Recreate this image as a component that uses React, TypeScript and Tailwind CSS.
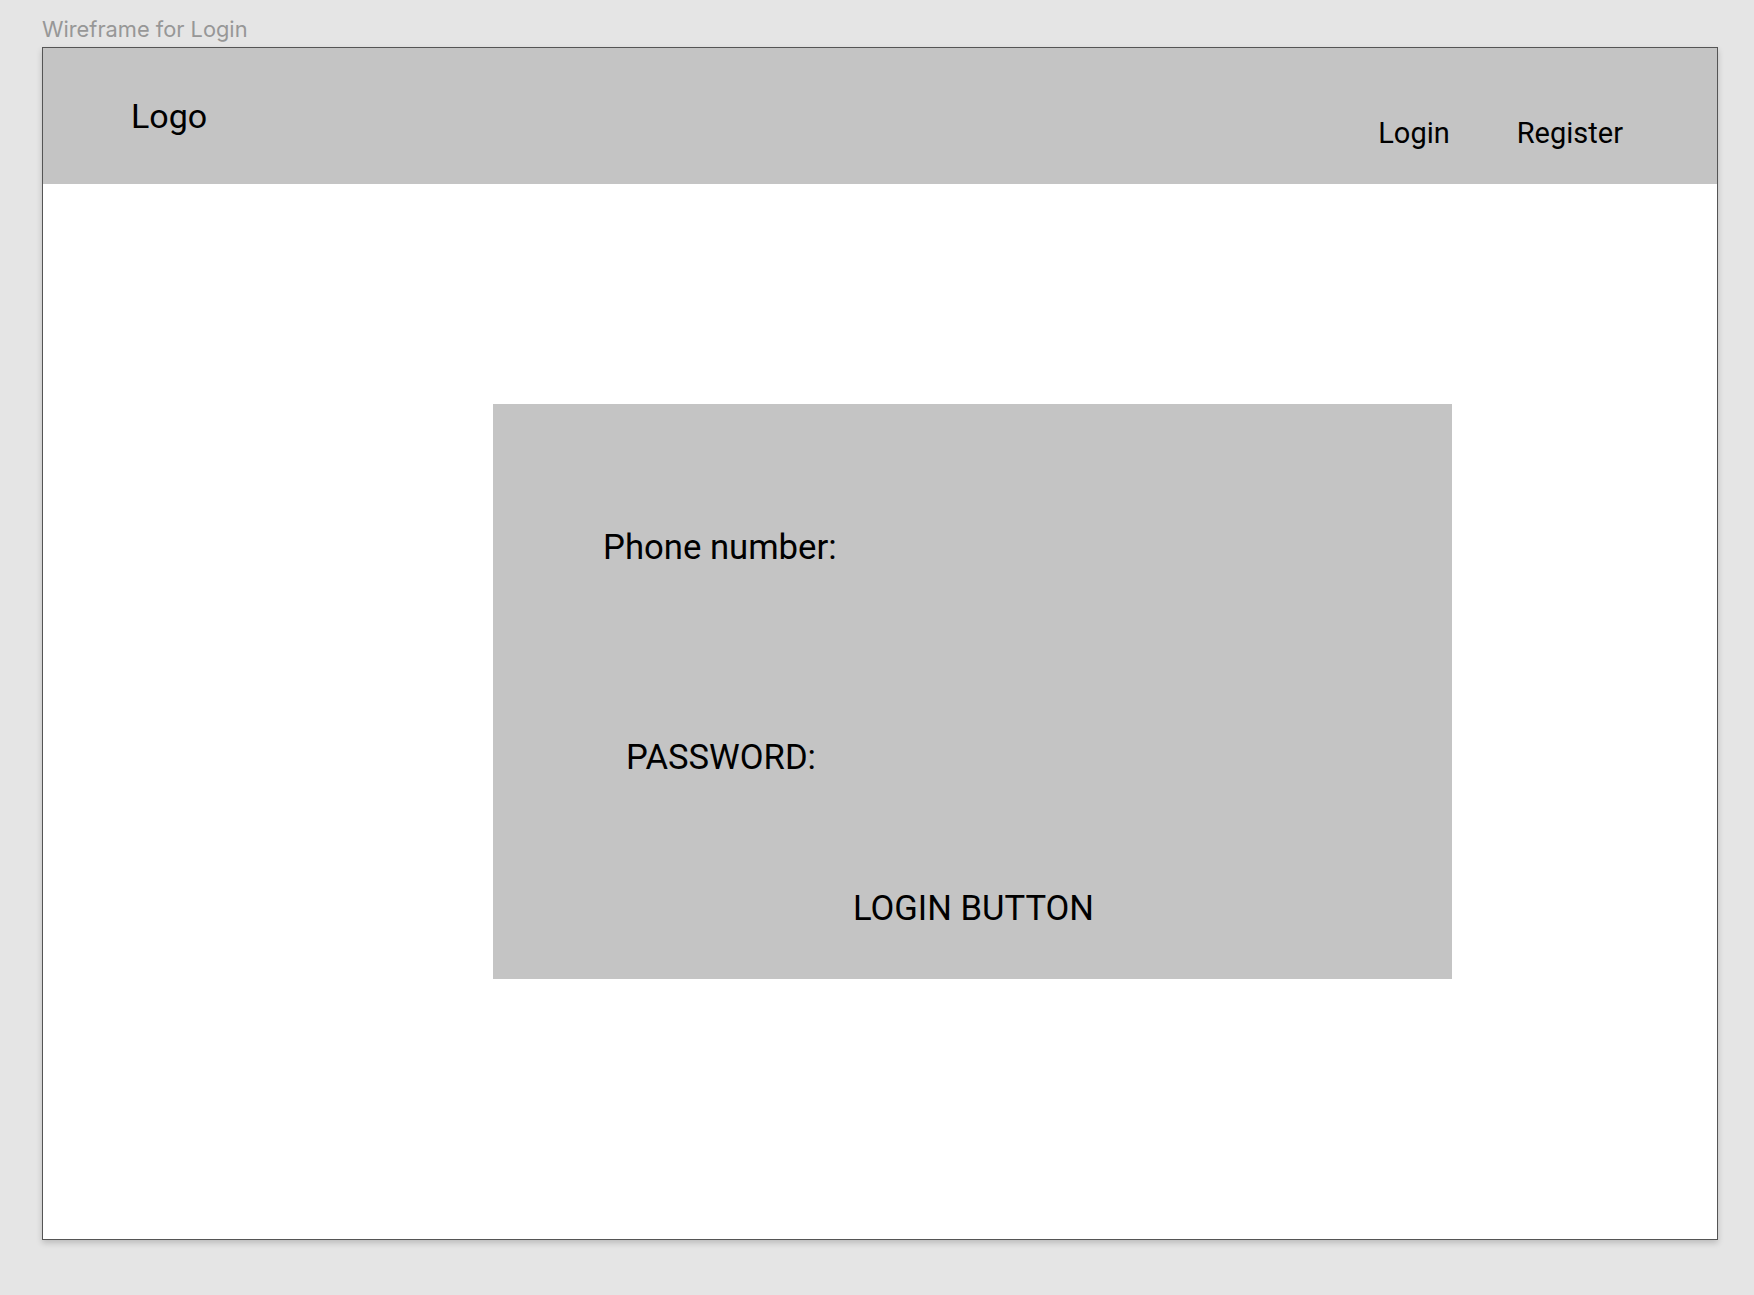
export default function App() {
  return (
    <div className="min-h-[1295px] w-[1754px] bg-[#e5e5e5] font-['Roboto',sans-serif]">
      <div className="h-[47px] pl-[42px] pt-[19px]">
        <p className="font-['Inter',sans-serif] text-[21.8px] leading-none text-[#979797]">Wireframe for Login</p>
      </div>

      {/* Frame */}
      <div className="ml-[42px] w-[1676px] h-[1193px] border border-[#555555] bg-white shadow-[0_3px_6px_rgba(0,0,0,0.18)] flex flex-col">
        {/* Header */}
        <header className="h-[136px] bg-[#c4c4c4] flex justify-between shrink-0">
          <div className="pl-[88px] pt-[51px]">
            <span className="text-[34px] leading-none text-black">Logo</span>
          </div>
          <nav className="flex gap-[67px] pr-[94px] pt-[71px]">
            <a className="text-[29px] leading-none text-black">Login</a>
            <a className="text-[29px] leading-none text-black">Register</a>
          </nav>
        </header>

        {/* Body */}
        <main className="flex-1 pt-[220px] pl-[450px]">
          <div className="w-[959px] h-[575px] bg-[#c4c4c4] flex flex-col pt-[126px]">
            <label className="ml-[110px] text-[34.7px] leading-none text-black">Phone number:</label>
            <label className="ml-[133px] mt-[175px] text-[34.6px] leading-none text-black">PASSWORD:</label>
            <button className="ml-[360px] mt-[117px] self-start text-[34.6px] leading-none text-black">LOGIN BUTTON</button>
          </div>
        </main>
      </div>
    </div>
  )
}
